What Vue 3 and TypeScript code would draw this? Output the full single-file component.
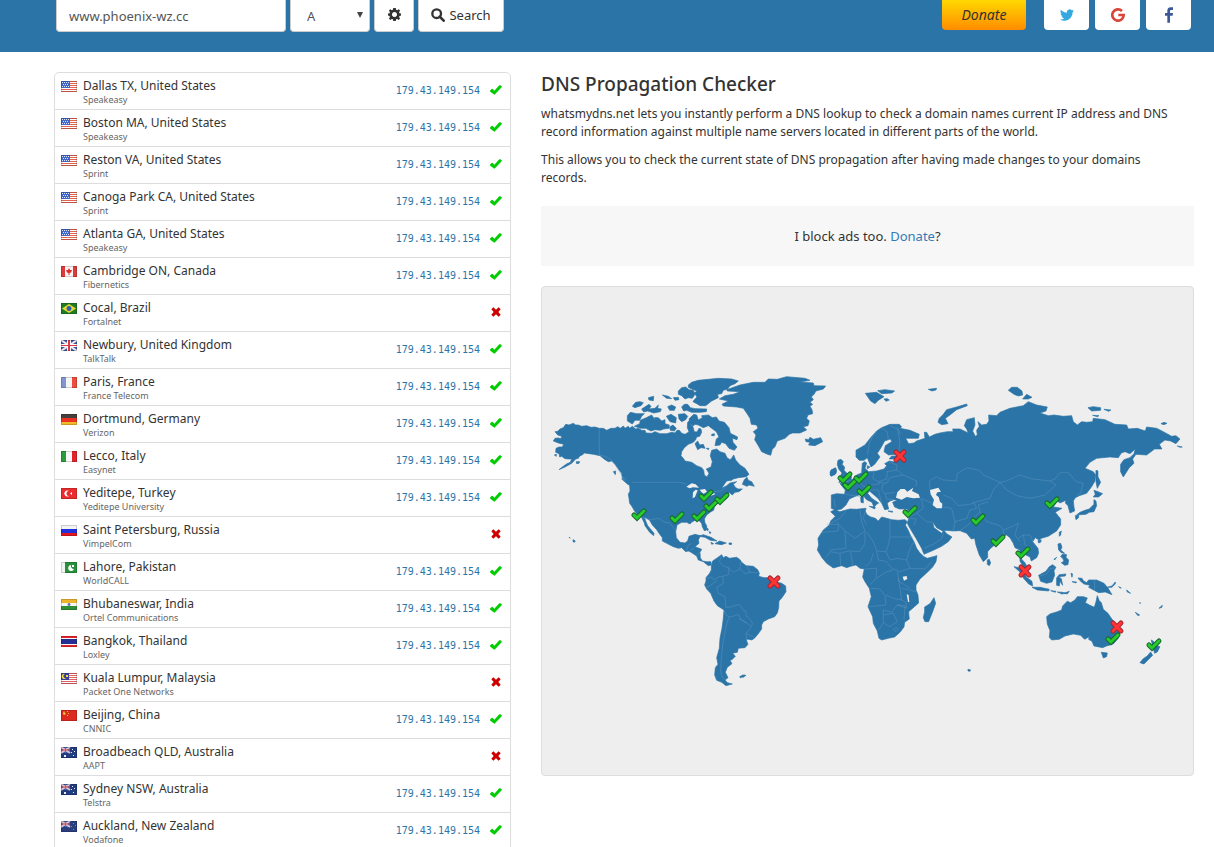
<script setup lang="ts">
import { ref } from 'vue'

interface Shape { d: string; c: string }
interface Server { flag: string; place: string; provider: string; ok: boolean }
interface Marker { x: number; y: number; ok: boolean }

const domain = ref('www.phoenix-wz.cc')
const recordType = ref('A')
const recordTypes = ['A', 'AAAA', 'CNAME', 'MX', 'NS', 'PTR', 'SOA', 'TXT']
const ip = '179.43.149.154'

const full = 'M0 0H16V11H0Z'
const unionJack: Shape[] = [
  { d: 'M0 0H9V6H0Z', c: '#35509b' },
  { d: 'M0 0L9 6M9 0L0 6', c: 'line:#d9c3d2' },
  { d: 'M4 0H5V6H4ZM0 2.5H9V3.5H0Z', c: '#e0444c' },
]

const flags: Record<string, Shape[]> = {
  us: [
    { d: full, c: '#fff' },
    { d: 'M0 0H16V1H0ZM0 2H16V3H0ZM0 4H16V5H0ZM0 6H16V7H0ZM0 8H16V9H0ZM0 10H16V11H0Z', c: '#e2644f' },
    { d: 'M0 0H9V7H0Z', c: '#3f66c8' },
    { d: 'M1 1h1v1h-1zM3 1h1v1h-1zM5 1h1v1h-1zM7 1h1v1h-1zM2 3h1v1h-1zM4 3h1v1h-1zM6 3h1v1h-1zM1 5h1v1h-1zM3 5h1v1h-1zM5 5h1v1h-1zM7 5h1v1h-1z', c: '#dce6fa' },
  ],
  ca: [
    { d: full, c: '#fbf3f3' },
    { d: 'M0 0H4V11H0ZM12 0H16V11H12Z', c: '#dd3b3b' },
    { d: 'M8 2L9 4L11 4L10 6.500L8.500 7V9H7.500V7L6 6.500L5 4L7 4Z', c: '#d92d2d' },
  ],
  br: [
    { d: full, c: '#1d7d25' },
    { d: 'M8 1L15 5.500L8 10L1 5.500Z', c: '#ecd82e' },
    { d: 'M8 3a2.500 2.500 0 1 0 .01 0Z', c: '#2b5fb4' },
  ],
  gb: [
    { d: full, c: '#3b559f' },
    { d: 'M0 0L16 11M16 0L0 11', c: 'line:#f1e6ea' },
    { d: 'M6 0H10V11H6ZM0 4H16V7H0Z', c: '#fff' },
    { d: 'M7 0H9V11H7ZM0 5H16V6H0Z', c: '#dd3944' },
  ],
  fr: [
    { d: full, c: '#f5f5f7' },
    { d: 'M0 0H5V11H0Z', c: '#8196d0' },
    { d: 'M11 0H16V11H11Z', c: '#ee4b3f' },
  ],
  de: [
    { d: full, c: '#45403c' },
    { d: 'M0 4H16V8H0Z', c: '#ec3323' },
    { d: 'M0 8H16V11H0Z', c: '#f0b928' },
  ],
  it: [
    { d: full, c: '#f8f8f8' },
    { d: 'M0 0H5V11H0Z', c: '#2a9c3b' },
    { d: 'M11 0H16V11H11Z', c: '#e0232c' },
  ],
  tr: [
    { d: full, c: '#ea2c2c' },
    { d: 'M8 3A3 3 0 1 0 8 8A2.500 2.500 0 1 1 8 3ZM9 5.500L11 4V7Z', c: '#fff' },
  ],
  ru: [
    { d: full, c: '#f3f3f3' },
    { d: 'M0 4H16V8H0Z', c: '#2231dd' },
    { d: 'M0 8H16V11H0Z', c: '#e3161f' },
  ],
  pk: [
    { d: full, c: '#f1f5f0' },
    { d: 'M4 0H16V11H4Z', c: '#26913a' },
    { d: 'M10 3A3 3 0 1 0 13 7A3 3 0 0 1 10 3ZM11 3H13V5H11Z', c: '#fff' },
  ],
  in: [
    { d: full, c: '#f6f6f6' },
    { d: 'M0 0H16V4H0Z', c: '#eeb52f' },
    { d: 'M0 7H16V11H0Z', c: '#2f8f35' },
    { d: 'M8 4a1.500 1.500 0 1 0 .01 0Z', c: '#5c73ad' },
  ],
  th: [
    { d: full, c: '#f6f6f6' },
    { d: 'M0 0H16V2H0ZM0 9H16V11H0Z', c: '#e6242c' },
    { d: 'M0 3H16V8H0Z', c: '#242f91' },
  ],
  my: [
    { d: full, c: '#fff' },
    { d: 'M0 0H16V1H0ZM0 2H16V3H0ZM0 4H16V5H0ZM0 6H16V7H0ZM0 8H16V9H0ZM0 10H16V11H0Z', c: '#e06260' },
    { d: 'M0 0H8V7H0Z', c: '#3a3f9c' },
    { d: 'M4 1A2.500 2.500 0 1 0 5 5A2 2 0 0 1 4 1ZM5 2H7V4H5Z', c: '#f1dc3c' },
  ],
  cn: [
    { d: full, c: '#dc2a20' },
    { d: 'M2 3L3 1L4 3L5 4L3 5L2 4ZM6 1H7V2H6ZM7 3H8V4H7ZM6 5H7V6H6Z', c: '#f3ca3a' },
  ],
  au: [
    { d: full, c: '#223c80' },
    ...unionJack,
    { d: 'M3 8h2v2h-2zM11 2h1v1h-1zM13 4h1v1h-1zM10 5h1v1h-1zM12 8h1v1h-1z', c: '#e8ecf6' },
  ],
  nz: [
    { d: full, c: '#2a3f80' },
    ...unionJack,
    { d: 'M12 2h1v1h-1zM14 4h1v1h-1zM10 5h1v1h-1zM12 8h1v1h-1z', c: '#e25a66' },
  ],
}

const servers: Server[] = [
  { flag: 'us', place: 'Dallas TX, United States', provider: 'Speakeasy', ok: true },
  { flag: 'us', place: 'Boston MA, United States', provider: 'Speakeasy', ok: true },
  { flag: 'us', place: 'Reston VA, United States', provider: 'Sprint', ok: true },
  { flag: 'us', place: 'Canoga Park CA, United States', provider: 'Sprint', ok: true },
  { flag: 'us', place: 'Atlanta GA, United States', provider: 'Speakeasy', ok: true },
  { flag: 'ca', place: 'Cambridge ON, Canada', provider: 'Fibernetics', ok: true },
  { flag: 'br', place: 'Cocal, Brazil', provider: 'Fortalnet', ok: false },
  { flag: 'gb', place: 'Newbury, United Kingdom', provider: 'TalkTalk', ok: true },
  { flag: 'fr', place: 'Paris, France', provider: 'France Telecom', ok: true },
  { flag: 'de', place: 'Dortmund, Germany', provider: 'Verizon', ok: true },
  { flag: 'it', place: 'Lecco, Italy', provider: 'Easynet', ok: true },
  { flag: 'tr', place: 'Yeditepe, Turkey', provider: 'Yeditepe University', ok: true },
  { flag: 'ru', place: 'Saint Petersburg, Russia', provider: 'VimpelCom', ok: false },
  { flag: 'pk', place: 'Lahore, Pakistan', provider: 'WorldCALL', ok: true },
  { flag: 'in', place: 'Bhubaneswar, India', provider: 'Ortel Communications', ok: true },
  { flag: 'th', place: 'Bangkok, Thailand', provider: 'Loxley', ok: true },
  { flag: 'my', place: 'Kuala Lumpur, Malaysia', provider: 'Packet One Networks', ok: false },
  { flag: 'cn', place: 'Beijing, China', provider: 'CNNIC', ok: true },
  { flag: 'au', place: 'Broadbeach QLD, Australia', provider: 'AAPT', ok: false },
  { flag: 'au', place: 'Sydney NSW, Australia', provider: 'Telstra', ok: true },
  { flag: 'nz', place: 'Auckland, New Zealand', provider: 'Vodafone', ok: true },
]

const markers: Marker[] = [
  { x: 639, y: 514, ok: true }, { x: 677, y: 517, ok: true }, { x: 706, y: 495, ok: true },
  { x: 711, y: 505, ok: true }, { x: 699, y: 515, ok: true }, { x: 722, y: 498, ok: true },
  { x: 845, y: 477, ok: true }, { x: 850, y: 484, ok: true }, { x: 861, y: 477, ok: true },
  { x: 864, y: 490, ok: true }, { x: 910, y: 511, ok: true }, { x: 978, y: 519, ok: true },
  { x: 998, y: 540, ok: true }, { x: 1052, y: 502, ok: true }, { x: 1023, y: 552, ok: true },
  { x: 1113, y: 638, ok: true }, { x: 1154, y: 644, ok: true },
  { x: 774, y: 582, ok: false }, { x: 900, y: 456, ok: false },
  { x: 1025, y: 571, ok: false }, { x: 1117, y: 627, ok: false },
]
</script>

<template>
  <header class="topbar">
    <form class="lookup" @submit.prevent>
      <input v-model="domain" class="field domain" type="text" aria-label="Domain name">
      <span class="select-wrap">
        <select v-model="recordType" class="field record" aria-label="Record type">
          <option v-for="t in recordTypes" :key="t" :value="t">{{ t }}</option>
        </select>
        <svg class="caret" viewBox="0 0 6 6" aria-hidden="true"><path d="M0 0H6L3 6Z" /></svg>
      </span>
      <button class="field gear" type="button" aria-label="Options">
        <svg viewBox="0 0 26 26" width="13" height="13" aria-hidden="true">
          <path fill-rule="evenodd" d="M10.500 0h5l.8 3.600 2 .9 3.200-2 2.600 2.600-2 3.200.9 2.200 3 .6v4l-3 .7-.9 2.200 2 3.200-2.600 2.600-3.200-2-2 .9-.8 3.500h-5l-.8-3.500-2-.9-3.200 2-2.600-2.600 2-3.200-.9-2.200-3-.7v-4l3-.6.9-2.200-2-3.200 2.600-2.600 3.200 2 2-.9zM13 8a5 5 0 1 0 .01 0z" />
        </svg>
      </button>
      <button class="field search" type="submit">
        <svg viewBox="0 0 42 42" width="14" height="14" aria-hidden="true">
          <circle cx="17" cy="17" r="13" fill="none" stroke="currentColor" stroke-width="7" />
          <path d="M26 26L38 38" stroke="currentColor" stroke-width="8" stroke-linecap="round" />
        </svg>
        <span>Search</span>
      </button>
    </form>
    <nav class="social" aria-label="Support and social">
      <a class="donate" href="#donate">Donate</a>
      <a class="share" href="#twitter" aria-label="Twitter">
        <svg viewBox="0 0 24 24" width="14" height="14" fill="#35a8e0" aria-hidden="true">
          <path d="M23.950 4.570a10 10 0 0 1-2.820.770 4.960 4.960 0 0 0 2.160-2.720c-.95.560-2 .960-3.130 1.190a4.920 4.920 0 0 0-8.380 4.480C7.690 8.090 4.070 6.130 1.640 3.160a4.930 4.930 0 0 0 1.520 6.580 4.900 4.900 0 0 1-2.230-.61v.06a4.920 4.920 0 0 0 3.950 4.830 5 5 0 0 1-2.210.08 4.940 4.940 0 0 0 4.600 3.420A9.870 9.870 0 0 1 0 19.540a13.990 13.990 0 0 0 7.550 2.210c9.050 0 14-7.500 14-13.980 0-.21 0-.42-.02-.63a9.940 9.940 0 0 0 2.460-2.550z" />
        </svg>
      </a>
      <a class="share" href="#google" aria-label="Google">
        <svg viewBox="0 0 42 42" width="14" height="14" aria-hidden="true">
          <path d="M33 9A17 17 0 1 0 38 21H22" fill="none" stroke="#d8453a" stroke-width="8" />
        </svg>
      </a>
      <a class="share" href="#facebook" aria-label="Facebook">
        <svg viewBox="0 0 24 48" width="8" height="16" fill="#3b5998" aria-hidden="true">
          <path d="M7 47V26H0V18H7V12C7 4 11 1 17 1H24V9H19C17 9 15 10 15 13V18H24L23 26H15V47Z" />
        </svg>
      </a>
    </nav>
  </header>

  <main class="content">
    <table class="results" aria-label="DNS results">
      <tbody>
        <tr v-for="s in servers" :key="s.place">
          <td class="where">
            <div class="location">
              <svg class="flag" viewBox="0 0 16 11" aria-hidden="true">
                <template v-for="(p, i) in flags[s.flag]" :key="i">
                  <path v-if="p.c.startsWith('line:')" :d="p.d" :stroke="p.c.slice(5)" stroke-width="2" fill="none" />
                  <path v-else :d="p.d" :fill="p.c" />
                </template>
                <path d="M.5 .5H15.500V10.500H.5Z" fill="none" stroke="#000" stroke-opacity=".16" />
              </svg>
              <div>
                <div class="place">{{ s.place }}</div>
                <div class="provider">{{ s.provider }}</div>
              </div>
            </div>
          </td>
          <td class="ip">{{ s.ok ? ip : '' }}</td>
          <td class="status">
            <svg v-if="s.ok" viewBox="0 0 36 30" width="12" height="10" role="img" aria-label="Resolved">
              <path fill="#0c0" d="M0 18Q0 17 1 16L5 12Q7 11 8 12L13 17L28 1Q30 0 31 1L35 4Q36 5 35 7L15 28Q13 30 11 28L1 20Q0 19 0 18Z" />
            </svg>
            <svg v-else viewBox="0 0 30 30" width="10" height="10" role="img" aria-label="Failed">
              <path fill="#c00" d="M7 1L15 8L23 1L29 7L22 15L29 23L23 29L15 22L7 29L1 23L8 15L1 7Z" />
            </svg>
          </td>
        </tr>
      </tbody>
    </table>

    <section class="info">
      <h1>DNS Propagation Checker</h1>
      <p>whatsmydns.net lets you instantly perform a DNS lookup to check a domain names current IP address and DNS record information against multiple name servers located in different parts of the world.</p>
      <p>This allows you to check the current state of DNS propagation after having made changes to your domains records.</p>
      <div class="notice">I block ads too. <a href="#donate">Donate</a>?</div>
      <div class="map">
        <svg viewBox="542 287 651 488" role="img" aria-label="World map of DNS servers">
          <g transform="translate(545 365) scale(.33333)">
            <path class="land" d="M30 200L38 199L45 192L55 188L62 178L72 180L85 175L92 180L100 180L110 184L125 182L138 187L150 186L163 190L175 190L185 196L198 190L210 190L218 185L226 190L235 183L240 190L250 184L254 190L262 184L272 192L280 190L290 196L300 196L303 204L320 205L330 200L345 206L365 206L380 202L390 204L396 196L403 196L410 205L420 208L428 203L432 200L427 188L428 172L434 166L438 180L444 186L448 200L456 201L462 190L468 192L470 202L464 214L455 216L452 224L445 232L430 238L418 248L410 260L408 272L415 280L420 288L440 292L455 302L470 308L476 316L478 330L486 336L492 325L484 312L498 306L502 290L496 272L500 256L515 252L525 260L540 265L546 278L555 284L560 280L566 270L572 285L585 300L600 310L612 328L604 335L580 338L565 342L560 346L545 348L535 362L530 370L545 362L555 354L575 350L565 358L572 368L580 372L592 372L582 380L570 382L562 390L552 382L548 398L540 405L520 412L512 420L508 426L506 436L498 440L485 450L478 462L480 474L485 482L485 495L478 497L472 485L470 475L463 468L450 466L440 472L435 477L425 472L410 472L396 480L392 500L394 518L405 532L420 534L428 528L432 514L450 508L466 512L460 525L462 535L450 545L470 553L465 562L466 578L472 588L485 590L498 590L498 600L490 602L475 590L460 585L455 573L438 562L430 558L422 560L410 548L400 550L385 545L365 535L352 528L352 518L342 505L335 494L322 480L314 466L298 456L302 468L308 482L318 494L327 505L326 512L314 502L300 482L298 474L292 462L288 452L276 447L268 437L262 426L254 415L252 400L250 388L255 378L254 362L245 350L232 340L230 325L220 312L210 298L200 288L190 290L180 284L165 272L145 268L132 266L118 264L112 270L105 272L100 280L92 282L80 295L60 306L42 314L52 306L66 296L76 292L80 282L72 282L60 281L50 274L44 276L42 266L32 262L33 250L42 246L52 246L56 238L40 234L25 228L30 220L40 219L48 221L50 214L38 210Z" />
            <path class="land" d="M430 60L440 52L460 46L490 43L520 40L560 42L580 48L570 56L555 62L548 72L535 76L530 86L518 88L520 98L500 108L482 122L465 122L455 116L444 110L448 104L456 96L448 84L456 78L440 72L430 67ZM400 78L410 68L422 66L432 74L445 76L450 88L442 100L430 98L420 102L410 92L400 88ZM410 126L418 118L428 118L436 128L450 131L485 132L484 140L465 142L440 142L425 136L416 138ZM368 125L380 120L392 126L388 136L374 136ZM352 90L370 94L380 101L365 100ZM385 98L400 97L402 104L390 106ZM310 98L326 94L325 107L312 105ZM262 124L272 112L285 110L295 113L288 122L270 128ZM290 132L312 118L318 124L312 132L330 130L340 120L338 130L349 132L346 140L326 144L308 138L296 141ZM247 152L256 142L275 146L298 146L290 154L284 166L270 166L262 177L247 168ZM268 184L284 176L286 166L304 158L320 150L332 168L328 158L340 158L350 168L360 164L360 176L373 180L372 190L356 192L346 196L330 194L318 198L302 190L286 190ZM364 154L378 148L394 158L392 174L375 170ZM400 148L420 146L428 154L422 164L410 170L402 162ZM374 186L384 180L394 190L388 198L376 196Z" />
            <path class="land" d="M432 162L446 148L455 150L460 165L472 158L470 152L490 150L502 158L514 156L522 168L538 172L552 188L556 205L578 216L576 224L562 220L564 232L576 246L568 256L552 250L542 236L530 232L525 240L510 242L514 222L522 216L514 200L500 190L490 182L475 188L460 180L450 178L444 184L436 176ZM450 236L458 228L464 240L475 238L480 250L468 248L458 254ZM500 208L508 206L508 212L500 212ZM484 250L492 250L490 254ZM592 358L598 344L606 337L610 346L620 350L628 364L612 360L606 364ZM230 342L245 348L260 362L248 358ZM205 320L212 318L211 329ZM94 290L104 290L102 295L95 296ZM28 270L34 268L34 274ZM72 517L75 518L75 520ZM84 524L91 528L88 532L84 530ZM460 514L475 509L498 517L516 528L496 526L480 517ZM510 536L524 528L544 534L530 539ZM552 534L560 534L559 539L552 538ZM498 532L506 536L500 538ZM484 488L490 492L488 498ZM492 500L498 502L495 506Z" />
            <path class="water" d="M424 365L440 355L452 358L462 368L444 367L434 370ZM444 382L452 374L458 376L450 396L443 400ZM464 374L480 372L486 380L476 386L470 382ZM466 398L490 390L486 396L470 402ZM494 390L510 384L508 389L496 392Z" />
            <path class="border" d="M163 190V270L182 275L200 285L215 306L232 335L245 345M262 352H405L425 358M488 390L505 380L530 378L545 362M292 458L318 464L340 460L360 472L374 474L392 496M425 556L430 540L440 536M455 570L470 556M436 556L448 548" />
          </g>
          <g transform="translate(690 365) scale(.33333)">
            <path class="land" d="M88 102L105 92L130 88L150 80L112 78L110 74L150 60L190 52L225 52L235 42L262 43L290 35L345 40L360 46L330 51L370 54L372 62L407 63L400 72L378 78L372 88L364 96L370 104L360 112L368 118L360 124L366 134L368 146L354 150L350 160L358 168L354 182L340 185L350 195L330 204L308 204L298 208L285 220L262 228L255 245L247 253L242 271L228 266L215 260L205 242L194 224L198 210L190 200L204 190L200 180L184 178L180 160L170 144L160 130L140 126L100 123L96 118L115 108Z" />
            <path class="land" d="M346 222L356 224L360 217L370 223L392 218L398 230L375 242L356 240L360 232L348 230ZM444 286L453 283L460 290L456 298L464 306L462 316L470 324L484 332L484 345L462 350L446 352L458 340L450 336L456 324L446 312L442 298ZM420 330L424 316L436 308L440 318L436 328L424 334ZM150 935L158 930L168 931L160 937ZM150 934L154 938L150 938Z" />
            <path class="land" d="M64 600L68 588L80 580L95 569L100 578L108 574L118 580L140 577L150 584L155 592L168 602L190 604L203 614L208 625L206 634L222 638L235 638L255 650L275 655L287 663L288 680L276 698L267 708L266 728L262 744L254 755L235 762L220 770L215 780L215 792L205 806L195 818L186 825L170 822L170 828L174 838L165 848L145 850L142 862L128 865L136 874L126 884L120 886L126 896L112 907L106 922L114 938L105 945L112 953L127 957L108 962L95 952L80 946L74 930L76 908L84 898L80 878L88 850L90 820L96 790L100 760L102 735L82 722L72 708L62 685L50 672L44 660L48 648L48 638L58 626L64 615Z" />
            <path class="border" d="M95 572L88 590L98 602L115 608L117 628L98 634L100 655L80 668L85 685L105 695L108 728L122 726L148 718L160 736L168 740L168 752L180 762L188 776L180 792L168 805L170 822M102 735L108 750L118 756L112 770L105 800L98 840L94 880L92 920L98 938L106 944M118 756L136 752L146 748L150 762L170 774M150 762L182 782M48 642L62 636L74 645L85 636L98 634M48 668L60 662L80 648M115 608L130 622L150 612L152 592M150 612L166 626L180 622L172 604M180 622L202 624M168 805L190 816" />
          </g>
          <g transform="translate(810 375) scale(.33333)">
            <path class="land" d="M62 410L75 404L90 410L105 406L120 402L140 403L168 400L166 408L170 418L180 425L196 430L205 438L215 426L230 430L245 434L265 436L285 434L292 440L286 450L294 464L302 482L312 500L320 520L330 534L342 545L352 550L381 542L378 560L368 576L350 594L330 612L318 630L318 645L324 660L326 684L310 698L296 710L297 724L298 732L284 742L282 756L270 772L254 786L235 790L215 795L207 790L202 768L190 745L188 725L174 695L184 665L178 640L165 620L158 606L163 582L150 580L138 570L122 574L110 578L95 572L70 579L50 565L36 548L28 535L22 525L26 510L24 490L40 465L58 450L62 438L76 424ZM372 668L377 685L368 710L356 740L345 740L340 728L344 710L344 696L360 686Z" />
            <path class="land" d="M64 360L80 356L104 358L106 345L90 326L105 322L125 316L140 300L155 294L157 265L164 260L170 264L165 280L176 290L200 288L222 282L230 272L224 266L238 258L258 262L260 252L238 252L244 244L262 242L258 238L236 240L222 230L226 212L245 200L242 192L224 198L212 220L202 235L210 246L194 268L183 276L172 248L162 256L148 256L138 246L138 226L165 210L182 188L200 168L215 158L240 148L268 148L275 156L270 160L300 166L328 178L325 190L300 190L287 190L296 206L312 204L320 198L345 190L343 172L350 172L358 186L375 178L390 174L412 170L430 170L428 162L450 162L475 174L470 162L463 152L470 134L493 128L495 150L488 168L496 184L502 180L500 166L508 154L504 140L515 150L530 148L537 138L536 120L560 122L570 112L600 100L640 92L655 80L680 90L712 96L708 108L690 114L715 122L732 120L760 124L785 122L790 140L802 150L815 140L830 142L848 140L850 130L885 134L915 148L950 150L955 162L982 160L1006 168L1010 156L1040 160L1060 170L1085 184L1098 182L1110 192L1098 206L1082 198L1065 195L1048 208L1056 222L1034 222L1010 240L978 238L968 252L972 265L958 278L940 306L932 290L932 268L942 254L960 248L972 236L976 222L960 236L945 230L934 234L925 248L900 246L860 250L840 262L825 280L850 290L857 300L855 318L845 335L830 355L808 362L796 368L790 378L792 395L794 408L780 414L774 392L766 384L768 376L750 384L742 378L730 396L756 400L736 412L752 432L752 450L740 468L715 484L694 490L688 496L676 488L668 500L684 520L686 535L680 548L664 558L660 546L648 540L636 530L634 552L644 562L654 580L655 594L644 582L630 558L630 525L615 518L610 505L600 488L590 480L576 486L560 505L542 520L533 530L533 548L520 560L508 540L498 510L494 490L484 492L470 475L450 467L430 468L405 466L398 468L380 458L368 440L372 458L395 475L402 466L410 476L426 486L415 500L395 514L370 526L342 538L335 520L318 490L300 460L292 445L298 425L300 408L290 402L268 402L254 396L248 382L262 376L252 374L240 378L232 385L236 402L224 404L216 386L204 370L190 358L178 348L173 355L185 370L206 384L200 388L192 396L186 382L170 374L156 358L140 362L118 372L108 390L95 402L78 406L64 400Z" />
            <path class="land" d="M60 292L64 284L78 280L78 295L64 302ZM152 366L160 362L160 384L153 382ZM178 394L196 396L194 402ZM234 408L248 409L247 412ZM286 406L296 404L290 410ZM172 272L180 276L172 282ZM384 142L388 130L400 118L410 104L440 96L470 87L472 92L440 104L420 120L406 130L414 146L395 149ZM166 55L200 52L222 65L205 76L195 86L182 78ZM203 47L225 44L254 48L246 54L215 56ZM222 72L232 71L238 75L228 79ZM355 43L380 40L378 45L366 48ZM595 46L605 37L622 37L636 48L638 60L625 63L612 58ZM638 72L650 58L666 67L655 72ZM834 98L850 95L872 98L872 106L845 108ZM882 103L903 105L896 109ZM848 121L867 122L862 125ZM1053 146L1062 142L1071 145L1062 149ZM1102 213L1117 216L1110 217ZM858 286L864 288L864 305L872 322L862 340L858 320ZM852 346L864 350L878 356L866 366L850 366L856 358ZM852 374L858 378L860 392L852 410L838 412L828 418L800 420L810 412L825 406L838 402L852 388ZM796 422L806 420L806 428L798 434ZM532 555L538 553L542 564L538 572L532 568ZM684 497L694 495L692 502L686 504ZM748 472L754 468L752 480L748 484Z" />
            <path class="water" d="M258 368L262 352L272 342L284 342L292 350L310 338L306 348L326 358L330 368L310 370L290 366L275 374ZM360 345L385 338L393 350L382 352L378 360L386 366L390 380L397 386L396 400L380 400L368 390L372 374L362 358ZM278 605L290 603L292 612L282 617ZM266 620L270 640L275 648L270 640ZM290 658L294 680L298 682L296 660Z" />
            <path class="border" d="M62 445L90 430L108 408M50 448H85V468L36 472M80 440L105 468L135 490L165 468L155 440L150 405M105 468L108 520L60 525M168 402L160 430L170 450M240 434V486H308M240 486L235 510L228 530L200 528L190 500L170 470M165 470V505L150 530L115 528L90 535L60 530M60 530L48 548M90 535L92 572M122 530L128 572M190 535L182 560L168 575M228 530L240 555L262 550L290 555L300 520L312 500M290 555L300 580L345 582L365 560M200 528L205 555L230 560L245 580L270 590L300 580M163 582L200 580L198 610L180 630M200 610L230 590L250 585M182 640L210 642L225 662L228 690L175 695M228 660L250 670L275 675L270 640L265 610M275 640L318 650M262 590L268 620L300 640M275 675L288 682L290 700L262 690L245 712L220 705V745L205 765M220 720L250 715L262 740L240 755L222 745M262 690L285 692L282 735M250 764L258 758L266 762L258 770Z" />
            <path class="border" d="M200 168L188 185L178 205L172 240M235 195L232 170L215 160M240 152L262 162L270 200L266 238M262 155L272 180M192 290L188 310L205 320L230 312L232 290M150 300L146 318L160 335L185 330L210 326M72 372L76 398M108 358L150 365M205 322L230 325L240 308L280 300L320 318L318 335M230 290L262 285L280 300M238 262L262 270L258 285M220 326L215 345L225 356L255 352M180 345L205 345L215 385M225 356L230 372L250 374M300 425L320 415L340 400L335 375L330 370M320 415L350 440L368 442M300 430L318 432L312 450M342 520L375 505L395 490L400 475M335 370L355 380L370 385M360 345L358 318L380 305L400 315L440 318L442 295L472 278L508 286L520 300L570 322L590 318L628 300L668 312L720 318L735 312L752 292L775 292L798 320L820 325L812 355L800 362M570 322L590 345L620 362L660 370L705 360L738 330L720 318M395 395L425 400L435 440L430 468M400 360L425 370L445 392L480 388L500 380L540 370L550 345L570 322M435 440L470 430L480 405L500 400L490 380M450 467L475 450L490 430L510 410L505 390L535 380M510 410L530 440L570 452L580 465L605 455L625 445L615 480L630 500M580 465L582 485M625 490L640 480L660 480L670 500M640 480L645 510L665 520" />
          </g>
          <g transform="translate(960 500) scale(.33333)">
            <path class="land" d="M162 200L176 203L188 212L200 232L216 244L218 258L206 252L190 234L180 216ZM216 262L240 262L268 268L266 273L232 270ZM236 226L258 214L268 200L278 194L288 202L282 212L284 226L276 246L260 250L242 244ZM290 234L298 224L318 222L316 228L296 230L304 236L308 256L300 244L298 258L290 256ZM333 220L338 222L336 232ZM294 132L302 130L306 142L302 150L314 160L304 158L296 150ZM302 170L308 162L320 164L318 172L326 180L324 194L314 196L304 188L312 184L308 174ZM282 178L290 172L284 180ZM272 272L288 274L286 277ZM292 276L308 277L318 280L306 282ZM312 280L328 274L322 282ZM336 245L350 246L348 249ZM354 234L366 235L370 242L380 248L386 240L410 240L432 250L444 264L456 284L436 276L416 278L405 272L386 262L390 256L372 252L362 244ZM442 262L456 258L466 246L466 252L456 262ZM476 260L484 264L480 264ZM500 270L512 280L502 276ZM526 337L539 345L534 347ZM597 325L607 316L606 322ZM539 308L541 308L541 311ZM24 508L32 510L30 514L24 513Z" />
            <path class="land" d="M260 350L270 342L290 336L305 330L308 318L322 304L332 308L345 300L352 290L370 290L382 294L376 308L390 316L403 322L408 306L412 287L418 302L424 308L430 328L444 340L452 352L464 368L478 384L480 398L474 416L460 432L440 438L428 443L402 438L396 424L386 418L388 410L374 418L362 406L340 402L315 408L298 418L275 420L268 412L270 392L262 372ZM424 457L442 459L440 470L430 474ZM574 420L580 424L588 436L600 440L592 456L584 460L580 446ZM572 456L578 466L562 482L552 492L540 488L550 476L562 468Z" />
            <path class="border" d="M240 228L260 222L270 206L284 204M404 240V272" />
          </g>
          <g v-for="(m, i) in markers" :key="i" :transform="`translate(${m.x} ${m.y})`">
            <path :class="m.ok ? 'edge-ok' : 'edge-bad'" :d="m.ok ? 'M-5 1L-2 4L5 -3' : 'M-4 -4L4 4M4 -4L-4 4'" />
            <path :class="m.ok ? 'mark-ok' : 'mark-bad'" :d="m.ok ? 'M-5 1L-2 4L5 -3' : 'M-4 -4L4 4M4 -4L-4 4'" />
          </g>
        </svg>
      </div>
    </section>
  </main>
</template>

<style>
html, body {
  margin: 0;
  background: #fff;
  overflow-x: hidden;
}
</style>

<style scoped>
.topbar, .content, .field {
  font-family: "Noto Sans", "Open Sans", sans-serif;
  color: #333;
}
.topbar {
  display: flex;
  justify-content: space-between;
  align-items: flex-start;
  padding: 0 23px 20px 56px;
  background: #2b74a8;
}
.lookup {
  display: flex;
  gap: 4px;
}
.field {
  box-sizing: border-box;
  height: 32px;
  margin: 0;
  border: 1px solid #ccc;
  border-top: 0;
  border-radius: 0 0 4px 4px;
  background: #fff;
  font-size: 13px;
}
.domain {
  width: 230px;
  padding: 0 12px;
  color: #555;
}
.select-wrap {
  position: relative;
  display: flex;
}
.record {
  width: 80px;
  padding: 0 16px;
  appearance: none;
  color: #555;
}
.caret {
  position: absolute;
  right: 7px;
  top: 12px;
  width: 6px;
  height: 6px;
  fill: #444;
  pointer-events: none;
}
.gear, .search {
  display: flex;
  align-items: center;
  justify-content: center;
  gap: 4px;
  padding: 0 0 2px;
}
.gear {
  width: 40px;
}
.gear svg {
  fill: #333;
}
.search {
  width: 86px;
}
.social {
  display: flex;
  gap: 6px;
}
.donate, .share {
  display: flex;
  align-items: center;
  justify-content: center;
  height: 30px;
  border-radius: 0 0 4px 4px;
}
.donate {
  width: 84px;
  margin-right: 12px;
  padding-bottom: 2px;
  box-sizing: border-box;
  background: linear-gradient(#ffd800, #ff8c00);
  color: #333;
  font-size: 14px;
  font-style: italic;
  text-decoration: none;
}
.share {
  width: 45px;
  background: #fff;
}
.content {
  display: grid;
  grid-template-columns: 7fr 10fr;
  gap: 30px;
  align-items: start;
  padding: 20px 20px 0 54px;
}
.results {
  width: 100%;
  border: 1px solid #ddd;
  border-radius: 5px 5px 0 0;
  border-spacing: 0;
}
.results td {
  height: 36px;
  padding: 0;
  box-sizing: content-box;
  border-bottom: 1px solid #ddd;
}
.location {
  display: flex;
  gap: 6px;
  padding-left: 6px;
}
.flag {
  width: 16px;
  height: 11px;
  margin-top: 5px;
}
.place {
  padding-top: 1px;
  font-size: 12px;
  line-height: 17px;
}
.provider {
  color: #666;
  font-size: 9px;
  line-height: 12px;
}
.results .ip {
  width: 90px;
  height: 34px;
  padding-bottom: 2px;
  color: #2b74a8;
  font-family: "DejaVu Sans Mono", monospace;
  font-size: 10px;
  text-align: right;
}
.results .status {
  width: 28px;
  height: 34px;
  padding: 0 0 2px 2px;
}
.status svg {
  display: block;
  margin: 0 auto;
}
.info h1 {
  margin: 0 0 9px;
  font-size: 19px;
  font-weight: 500;
  line-height: 24px;
}
.info p {
  margin: 0 0 10px;
  padding-right: 12px;
  font-size: 12px;
  line-height: 18px;
}
.notice {
  margin-top: 19px;
  background: #f7f7f7;
  font-size: 13px;
  line-height: 60px;
  text-align: center;
}
.notice a {
  color: #337ab7;
  text-decoration: none;
}
.map {
  margin-top: 20px;
  border: 1px solid #ddd;
  border-radius: 4px;
  background: #eee;
}
.map > svg {
  display: block;
  width: 100%;
}
.land {
  fill: #2b74a8;
  stroke: #2b74a8;
  stroke-width: 2;
  stroke-linejoin: round;
}
.water {
  fill: #eee;
}
.border {
  fill: none;
  stroke: #6a9dc3;
  stroke-width: 2;
  stroke-opacity: .6;
  stroke-linejoin: round;
}
.edge-ok, .edge-bad, .mark-ok, .mark-bad {
  fill: none;
  stroke-linecap: round;
}
.edge-ok {
  stroke: #17672f;
  stroke-width: 5;
}
.mark-ok {
  stroke: #28cc2a;
  stroke-width: 3;
}
.edge-bad {
  stroke: #a52630;
  stroke-width: 5;
}
.mark-bad {
  stroke: #ff3535;
  stroke-width: 3;
}
</style>
